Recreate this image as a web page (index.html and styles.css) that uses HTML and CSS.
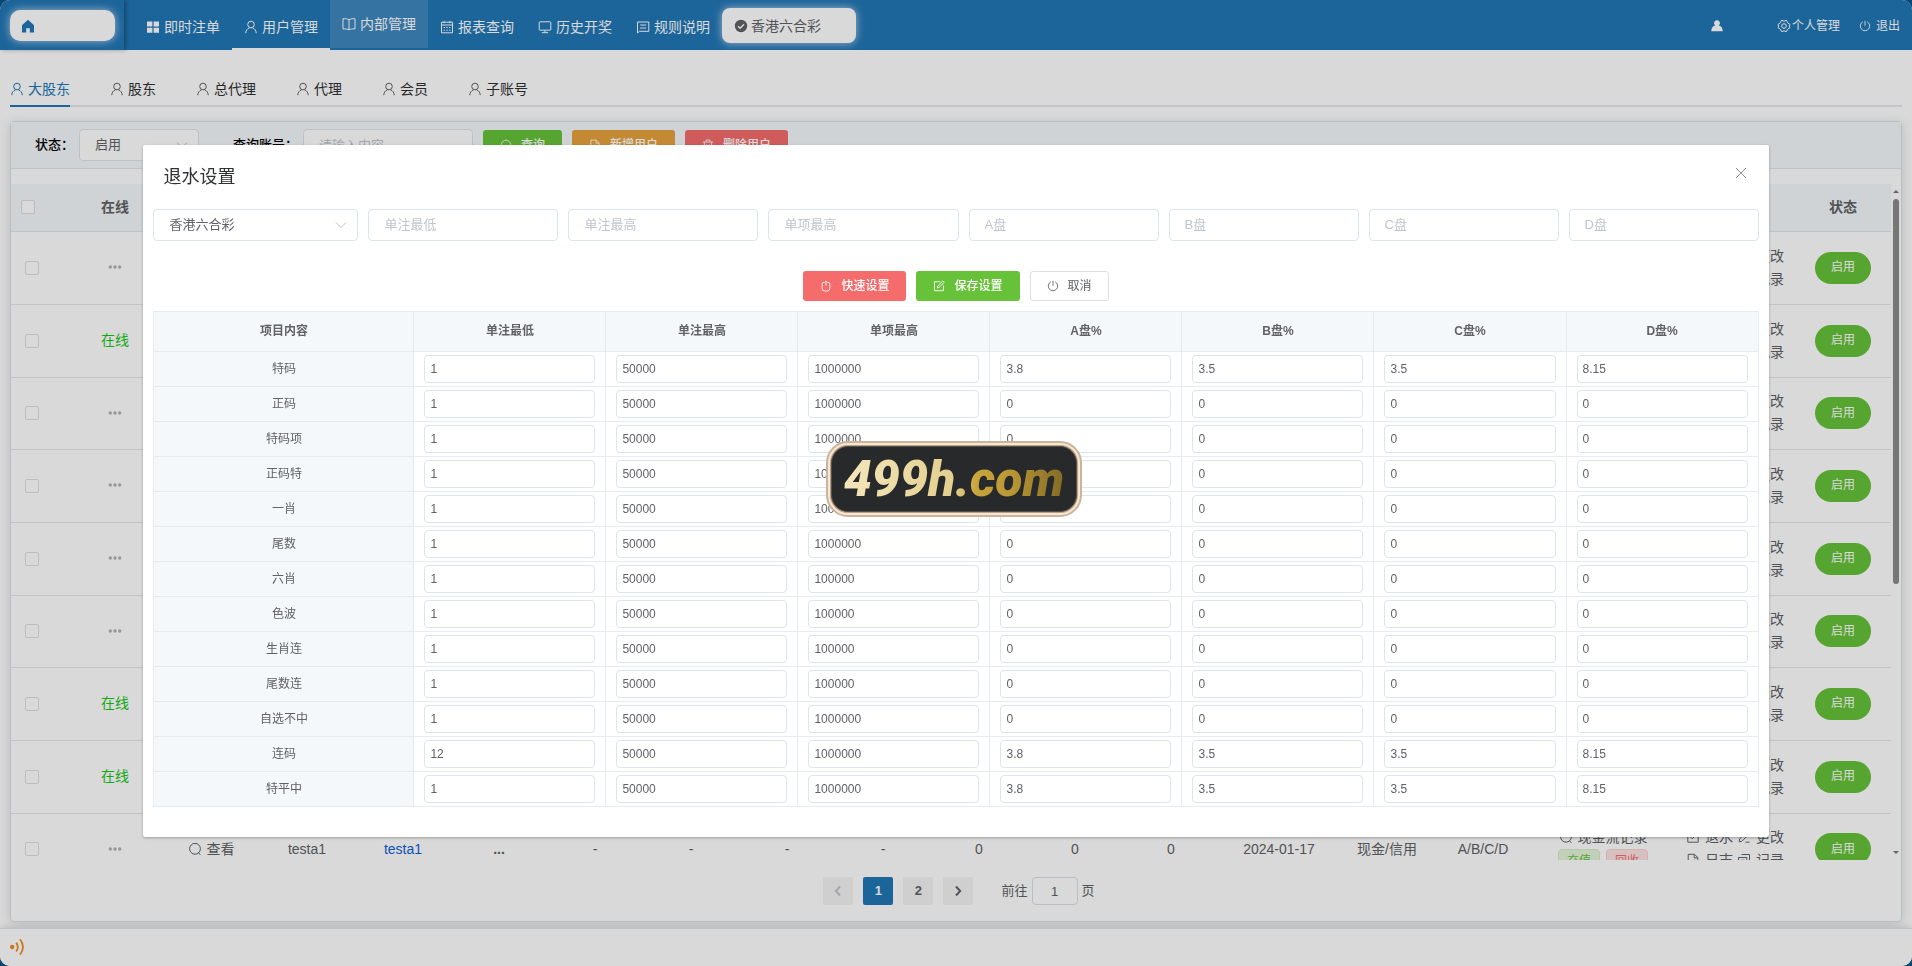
FILE: index.html
```html
<!DOCTYPE html>
<html lang="zh-CN">
<head>
<meta charset="utf-8">
<title>用户管理</title>
<link rel="stylesheet" href="styles.css">
</head>
<body>
<svg class="sprite" aria-hidden="true">
  <symbol id="i-home" viewBox="0 0 14 14"><path d="M7 .8 1 6.200v7.200h4.200V9.200h3.600v4.200H13V6.200z" fill="currentColor" stroke="none"/></symbol>
  <symbol id="i-grid" viewBox="0 0 14 14"><path d="M1 1.500h5.400v5H1zM7.600 1.500H13v5H7.600zM1 7.700h5.400v5H1zM7.600 7.700H13v5H7.600z" fill="currentColor" stroke="none"/></symbol>
  <symbol id="i-user" viewBox="0 0 14 14"><circle cx="7" cy="4.500" r="3.300"/><path d="M1.800 13.200c0-2.700 1.400-4.500 3.700-5.300M12.200 13.200c0-2.700-1.400-4.500-3.700-5.300"/></symbol>
  <symbol id="i-book" viewBox="0 0 14 14"><path d="M7 2.800C5.500 1.800 3.500 1.600 1 1.700v10.200c2.500-.1 4.500.1 6 .9 1.500-.8 3.500-1 6-.9V1.700c-2.500-.1-4.500.1-6 1.100zM7 2.800v10"/></symbol>
  <symbol id="i-cal" viewBox="0 0 14 14"><path d="M1.500 2.200h11v10.600h-11zM1.500 5h11M4.200.8v2.400M9.800.8v2.400M3.600 7.500h1.400M6.300 7.500h1.400M9 7.500h1.400M3.600 10.200h1.400M6.300 10.200h1.400M9 10.200h1.400"/></symbol>
  <symbol id="i-screen" viewBox="0 0 14 14"><path d="M2 1.800h10q.8 0 .8.800v6.800q0 .8-.8.800H2q-.8 0-.8-.8V2.600q0-.8.800-.8zM7 10.200v2.300M3.800 12.700h6.400"/></symbol>
  <symbol id="i-chat" viewBox="0 0 14 14"><path d="M1.500 2h11.300v9.300H3.600l-2.100 1.600zM4.200 5h6M4.200 8h6"/></symbol>
  <symbol id="i-check" viewBox="0 0 14 14"><circle cx="7" cy="7" r="6.200" fill="currentColor" stroke="none"/><path d="M4 7.200l2.200 2.100L10 5.300" stroke="#fff" stroke-width="1.400"/></symbol>
  <symbol id="i-person" viewBox="0 0 14 14"><path d="M7 1.200a2.900 2.900 0 0 1 1.700 5.300c2.500.4 4 2.300 4 5.800H1.300c0-3.500 1.500-5.400 4-5.800A2.900 2.900 0 0 1 7 1.200z" fill="currentColor" stroke="none"/></symbol>
  <symbol id="i-gear" viewBox="0 0 14 14"><path d="M4.600 1.300 7 2.200l2.400-.9 1.300 2.500 2.200 1.500-.6 1.700.6 1.700-2.200 1.500-1.300 2.500L7 11.800l-2.400.9-1.300-2.500-2.200-1.500.6-1.700-.6-1.700 2.200-1.500z"/><circle cx="7" cy="7" r="2.300"/></symbol>
  <symbol id="i-power" viewBox="0 0 14 14"><path d="M4.500 2.100a5.500 5.500 0 1 0 5 0M7 .9v5.800"/></symbol>
  <symbol id="i-search" viewBox="0 0 14 14"><circle cx="7" cy="6.800" r="5.400"/><path d="M10.500 10.700l1.800 2.200"/></symbol>
  <symbol id="i-doc" viewBox="0 0 14 14"><path d="M2.200 1.300h6.300l3.300 3.300v8.200H2.200zM8.200 1.300v3.600h3.600M5 9.800l3-3 1.300 1.300-2.800 2.800"/></symbol>
  <symbol id="i-trash" viewBox="0 0 14 14"><path d="M1 3.500h12M4.800 3.200V1.200h4.400v2M2.700 3.700v9.100h8.600V3.700M5.400 6.300v4M8.600 6.300v4"/></symbol>
  <symbol id="i-mouse" viewBox="0 0 14 14"><path d="M4.600 2.700Q2.500 2.700 2.500 5v4.800q0 3 3 3h3q3 0 3-3V5q0-2.300-2.100-2.300M7 1.200v5.200M5 3.100l2-2 2 2"/></symbol>
  <symbol id="i-edit" viewBox="0 0 14 14"><path d="M8.500 2H1.700v10.500h10.500V6.200M5 9.300l.4-2.200 6.100-6 1.600 1.600-6.100 6z"/></symbol>
  <symbol id="i-down" viewBox="0 0 14 14"><path d="M2 4.500l5 5 5-5"/></symbol>
  <symbol id="i-close" viewBox="0 0 14 14"><path d="M2 2l10 10M12 2 2 12"/></symbol>
  <symbol id="i-left" viewBox="0 0 14 14"><path d="M9 2.500 4.800 7 9 11.500"/></symbol>
  <symbol id="i-right" viewBox="0 0 14 14"><path d="M5 2.500 9.200 7 5 11.500"/></symbol>
  <symbol id="i-more" viewBox="0 0 14 14"><g fill="currentColor" stroke="none"><circle cx="2.300" cy="7" r="1.700"/><circle cx="7" cy="7" r="1.700"/><circle cx="11.700" cy="7" r="1.700"/></g></symbol>
  <symbol id="i-ticked" viewBox="0 0 14 14"><path d="M1.800 1.800h10.400v10.400H1.800zM4.300 6.800l2 2 3.600-3.800"/></symbol>
  <symbol id="i-pen" viewBox="0 0 14 14"><path d="M2.200 11.800l.4-2.800L9.800 1.800l2.300 2.300-7.200 7.200zM8.500 12.200h4"/></symbol>
  <symbol id="i-copy" viewBox="0 0 14 14"><path d="M4.500 1.500h8v8h-2M1.500 4.500h8.300v8.300H1.500zM3.800 7.200h3.800"/></symbol>
  <symbol id="i-sound" viewBox="0 0 16 18"><circle cx="3.200" cy="9" r="2.200" fill="currentColor" stroke="none"/><path d="M7.200 4.600q3.300 4.400 0 8.800M11 1.200q6 7.800 0 15.600" stroke-width="1.800"/></symbol>
</svg>

<div class="page">
  <header class="topbar">
    <div class="brand"><a class="brand-pill" href="#" aria-label="首页"><svg class="icon"><use href="#i-home"/></svg></a></div>
    <nav class="nav">
      <a class="nav-item" href="#"><svg class="icon"><use href="#i-grid"/></svg>即时注单</a>
      <a class="nav-item current" href="#"><svg class="icon"><use href="#i-user"/></svg>用户管理</a>
      <a class="nav-item hovered" href="#"><svg class="icon"><use href="#i-book"/></svg>内部管理</a>
      <a class="nav-item" href="#"><svg class="icon"><use href="#i-cal"/></svg>报表查询</a>
      <a class="nav-item" href="#"><svg class="icon"><use href="#i-screen"/></svg>历史开奖</a>
      <a class="nav-item" href="#"><svg class="icon"><use href="#i-chat"/></svg>规则说明</a>
      <button class="game" type="button"><svg class="icon"><use href="#i-check"/></svg>香港六合彩</button>
    </nav>
    <div class="account">
      <svg class="icon avatar"><use href="#i-person"/></svg>
      <a class="account-link profile" href="#"><svg class="icon"><use href="#i-gear"/></svg>个人管理</a>
      <a class="account-link logout" href="#"><svg class="icon small"><use href="#i-power"/></svg>退出</a>
    </div>
  </header>

  <main class="main">
    <nav class="tabs">
      <a class="tab active" href="#"><svg class="icon"><use href="#i-user"/></svg>大股东</a>
      <a class="tab" href="#"><svg class="icon"><use href="#i-user"/></svg>股东</a>
      <a class="tab" href="#"><svg class="icon"><use href="#i-user"/></svg>总代理</a>
      <a class="tab" href="#"><svg class="icon"><use href="#i-user"/></svg>代理</a>
      <a class="tab" href="#"><svg class="icon"><use href="#i-user"/></svg>会员</a>
      <a class="tab" href="#"><svg class="icon"><use href="#i-user"/></svg>子账号</a>
    </nav>

    <section class="panel">
      <form class="filters">
        <label class="filter-label" for="state">状态：</label>
        <span class="select state-select"><select class="field" id="state"><option>启用</option></select><svg class="icon chevron"><use href="#i-down"/></svg></span>
        <label class="filter-label account-label" for="query">查询账号：</label>
        <input class="field query" id="query" type="text" placeholder="请输入内容">
        <button class="btn success" type="button"><svg class="icon small"><use href="#i-search"/></svg>查询</button>
        <button class="btn warning" type="button"><svg class="icon small"><use href="#i-doc"/></svg>新增用户</button>
        <button class="btn danger" type="button"><svg class="icon small"><use href="#i-trash"/></svg>删除用户</button>
      </form>

      <div class="list">
        <div class="list-view">
          <table class="users">
            <colgroup>
              <col class="c-pick"><col><col><col><col><col><col><col><col><col><col><col><col><col class="c-date"><col><col><col class="c-cash"><col class="c-ops"><col>
            </colgroup>
            <thead>
              <tr>
                <th class="pick"><input class="tick" type="checkbox" aria-label="全选"></th>
                <th>在线</th><th></th><th></th><th></th><th></th><th></th><th></th><th></th><th></th><th></th><th></th><th></th><th></th><th></th><th></th><th></th><th></th><th>状态</th>
              </tr>
            </thead>
            <tbody id="user-rows"></tbody>
          </table>
        </div>
        <div class="scrollbar"><i class="arrow up"></i><i class="thumb"></i><i class="arrow down"></i></div>
      </div>

      <div class="pager">
        <button class="page-btn" type="button" disabled aria-label="上一页"><svg class="icon"><use href="#i-left"/></svg></button>
        <button class="page-btn on" type="button">1</button>
        <button class="page-btn" type="button">2</button>
        <button class="page-btn" type="button" aria-label="下一页"><svg class="icon"><use href="#i-right"/></svg></button>
        <label class="jump">前往<input class="jump-input" type="text" value="1">页</label>
      </div>
    </section>
  </main>

  <footer class="notice"><svg class="sound"><use href="#i-sound"/></svg></footer>
</div>

<div class="overlay">
  <section class="dialog" role="dialog" aria-labelledby="dialog-title">
    <header class="dialog-head">
      <h2 class="dialog-title" id="dialog-title">退水设置</h2>
      <button class="close" type="button" aria-label="关闭"><svg class="icon"><use href="#i-close"/></svg></button>
    </header>
    <div class="quick">
      <span class="select"><select class="field" aria-label="彩种"><option>香港六合彩</option></select><svg class="icon chevron"><use href="#i-down"/></svg></span>
      <input class="field" type="text" placeholder="单注最低" aria-label="单注最低">
      <input class="field" type="text" placeholder="单注最高" aria-label="单注最高">
      <input class="field" type="text" placeholder="单项最高" aria-label="单项最高">
      <input class="field" type="text" placeholder="A盘" aria-label="A盘">
      <input class="field" type="text" placeholder="B盘" aria-label="B盘">
      <input class="field" type="text" placeholder="C盘" aria-label="C盘">
      <input class="field" type="text" placeholder="D盘" aria-label="D盘">
    </div>
    <div class="actions">
      <button class="btn danger" type="button"><svg class="icon small"><use href="#i-mouse"/></svg>快速设置</button>
      <button class="btn success" type="button"><svg class="icon small"><use href="#i-edit"/></svg>保存设置</button>
      <button class="btn plain" type="button"><svg class="icon small"><use href="#i-power"/></svg>取消</button>
    </div>
    <table class="rates">
      <colgroup><col class="c-name"><col><col><col><col><col><col><col></colgroup>
      <thead>
        <tr><th>项目内容</th><th>单注最低</th><th>单注最高</th><th>单项最高</th><th>A盘%</th><th>B盘%</th><th>C盘%</th><th>D盘%</th></tr>
      </thead>
      <tbody id="rate-rows"></tbody>
    </table>
  </section>
  <div class="mark"><span class="mark-face"><span class="mark-text">499h.com</span></span></div>
</div>
<script src="script.js"></script>
</body>
</html>
```

FILE: styles.css
```css
* { box-sizing: border-box; }

body {
  margin: 0;
  background: #0c5488;
  color: #606266;
  font-family: "Liberation Sans", "Noto Sans CJK SC", sans-serif;
  font-size: 14px;
  line-height: 20px;
}

button, input, select { font: inherit; color: inherit; margin: 0; }
button { cursor: pointer; }
a { color: inherit; text-decoration: none; }

.sprite { position: absolute; width: 0; height: 0; }

.icon {
  flex: none;
  width: 14px;
  height: 14px;
  fill: none;
  stroke: currentColor;
  stroke-width: 1;
}
.icon.small { width: 12px; height: 12px; }

.page {
  display: flex;
  flex-direction: column;
  height: 100vh;
  border-radius: 10px;
  overflow: hidden;
  background: #fff;
}

/* top bar */
.topbar {
  flex: none;
  display: flex;
  height: 50px;
  background: #2277b6;
  color: #fff;
}
.brand {
  width: 124px;
  padding: 10px 9px 9px 10px;
  box-shadow: 2px 0 4px rgba(0, 0, 0, .3);
}
.brand-pill {
  display: flex;
  align-items: center;
  height: 31px;
  padding: 0 11px;
  border-radius: 10px;
  background: #fff;
  color: #2277b6;
  box-shadow: 0 0 8px rgba(255, 255, 255, .7);
}
.nav { display: flex; align-items: flex-start; padding-left: 10px; }
.nav-item {
  display: flex;
  align-items: center;
  gap: 4px;
  height: 50px;
  padding: 4px 12px 0;
}
.nav-item.current { box-shadow: inset 0 -2px #fff; }
.nav-item.hovered { height: 48px; padding-top: 0; background: #3f88c0; }
.game {
  display: flex;
  align-items: center;
  gap: 3px;
  width: 134px;
  height: 35px;
  margin-top: 8px;
  padding: 0 12px;
  border: 0;
  border-radius: 8px;
  background: #fff;
  box-shadow: 0 0 8px rgba(255, 255, 255, .7);
  color: #606266;
}
.account {
  display: flex;
  align-items: center;
  margin-left: auto;
  padding: 2px 12px 0 0;
  font-size: 12px;
}
.account-link { display: flex; align-items: center; }
.profile { gap: 1px; margin-left: 53px; }
.logout { gap: 5px; margin-left: 19px; }

/* level tabs */
.main {
  flex: 1;
  min-height: 0;
  display: flex;
  flex-direction: column;
  padding: 21px 10px 6px;
}
.tabs {
  flex: none;
  display: flex;
  gap: 40px;
  height: 36px;
  margin-bottom: 14px;
  color: #303133;
  box-shadow: inset 0 -2px #e4e7ed;
}
.tab { display: flex; align-items: center; gap: 4px; }
.tab .icon { color: #606266; }
.tab.active, .tab.active .icon { color: #2277b6; }
.tab.active { box-shadow: inset 0 -2px #2277b6; }

/* user list */
.panel {
  flex: 1;
  min-height: 0;
  display: flex;
  flex-direction: column;
  border: 1px solid #d8e2ea;
  border-radius: 4px;
  background: #fff;
  box-shadow: 0 2px 12px rgba(0, 0, 0, .14);
}
.filters {
  flex: none;
  display: flex;
  align-items: center;
  gap: 10px;
  height: 47px;
  padding-left: 24px;
  border-bottom: 1px solid #dfe6ec;
  background: #f4f8fb;
}
.filter-label { width: 34px; color: #000; font-size: 13px; font-weight: 500; white-space: nowrap; }
.account-label { width: 60px; margin-left: 24px; }
.select { display: grid; align-items: center; }
.select > * { grid-area: 1 / 1; }
.chevron { justify-self: end; margin-right: 10px; color: #c0c4cc; pointer-events: none; }
.state-select { width: 120px; }
.field {
  width: 100%;
  min-width: 0;
  height: 32px;
  padding: 0 15px;
  border: 1px solid #dae5ec;
  border-radius: 4px;
  background: #fff;
  font-size: 13px;
  appearance: none;
}
.field::placeholder { color: #c0c4cc; opacity: 1; }
.query { width: 170px; }

.btn {
  display: flex;
  align-items: center;
  gap: 9px;
  height: 30px;
  padding: 0 16px;
  border: 1px solid transparent;
  border-radius: 3px;
  color: #fff;
  font-size: 12px;
  font-weight: 500;
  white-space: nowrap;
}
.btn.success { background: #67c23a; }
.btn.warning { background: #e6a23c; }
.btn.danger { background: #f56c6c; }
.btn.plain { border-color: #dcdfe6; background: #fff; color: #606266; font-weight: 400; }

.list { flex: 1; min-height: 0; display: flex; margin-top: 15px; }
.list-view { flex: 1; overflow: hidden; }
.users { width: 100%; table-layout: fixed; border-collapse: collapse; }
.users .c-pick { width: 56px; }
.users .c-date { width: 120px; }
.users .c-cash { width: 144px; }
.users .c-ops { width: 120px; }
.users th { height: 47px; padding: 0; background: #f4f8fb; border-bottom: 1px solid #dfe6ec; }
.users td { height: 73px; padding: 0; border-bottom: 1px solid #e4e8ec; text-align: center; white-space: nowrap; line-height: 23px; }
.users tr:nth-child(3n) td { height: 72px; }
.users .pick { padding-left: 10px; text-align: left; }
.users td.pick { padding-left: 14px; }
.tick {
  display: block;
  width: 14px;
  height: 14px;
  border: 1px solid #dcdfe6;
  border-radius: 2px;
  background: #fff;
  appearance: none;
}
.users .icon { vertical-align: -2px; }
.online { color: #14c814; }
.offline { color: #b0b3b8; }
.users .user-link { color: #0f5fd7; }
.item { margin: 0 2px; }
.item .icon { margin-right: 5px; }
.tag {
  display: inline-block;
  height: 24px;
  margin: 0 3px;
  padding: 0 8px;
  border: 1px solid #d3efc4;
  border-radius: 4px;
  background: #e4f5da;
  color: #67c23a;
  font-size: 12px;
  line-height: 22px;
  vertical-align: top;
}
.tag.red { border-color: #fbd0d0; background: #fde2e2; color: #f56c6c; }
.round {
  height: 32px;
  padding: 0 16px;
  border: 0;
  border-radius: 16px;
  background: #67c23a;
  color: #fff;
  font-size: 12px;
}

.scrollbar {
  display: flex;
  flex-direction: column;
  align-items: center;
  width: 10px;
  padding: 6px 0;
}
.arrow { border: 3px solid transparent; }
.arrow.up { border-top: 0; border-bottom-color: #777; }
.arrow.down { margin-top: auto; border-bottom: 0; border-top-color: #777; }
.thumb { width: 6px; height: 58%; margin-top: 6px; border-radius: 3px; background: #8b8b8b; }

.pager {
  flex: none;
  display: flex;
  justify-content: center;
  gap: 10px;
  padding: 17px 0 16px 6px;
  font-size: 13px;
}
.page-btn {
  display: flex;
  align-items: center;
  justify-content: center;
  width: 30px;
  height: 28px;
  padding: 0;
  border: 0;
  border-radius: 2px;
  background: #f4f4f5;
  font-weight: 700;
}
.page-btn .icon { stroke-width: 2; }
.page-btn:disabled { color: #c0c4cc; }
.page-btn.on { background: #2277b6; color: #fff; }
.jump { display: flex; align-items: center; gap: 4px; margin-left: 18px; }
.jump-input { width: 46px; height: 28px; padding: 0; border: 1px solid #dcdfe6; border-radius: 4px; background: #fff; text-align: center; }

.notice {
  flex: none;
  display: flex;
  align-items: center;
  height: 38px;
  padding: 0 9px 2px;
  border-top: 1px solid #dfe6ec;
  background: #fff;
  box-shadow: 0 -1px 6px rgba(0, 0, 0, .12);
  color: #f08c1e;
}
.sound { width: 16px; height: 18px; fill: none; stroke: currentColor; }

/* dialog */
.overlay { position: fixed; inset: 0; background: rgba(0, 0, 0, .15); }
.dialog {
  width: 85%;
  margin: 15vh auto 0;
  padding: 20px 10px 30px;
  border-radius: 2px;
  background: #fff;
  box-shadow: 0 1px 3px rgba(0, 0, 0, .3);
}
.dialog-head { display: flex; justify-content: space-between; padding: 0 10px 20px; }
.dialog-title { margin: 0; color: #303133; font-size: 18px; font-weight: 400; line-height: 24px; }
.close { display: flex; height: 16px; padding: 1px; border: 0; background: none; color: #909399; }
.quick { display: grid; grid-template-columns: 205fr repeat(7, 190fr); gap: 10px; }
.actions { display: flex; justify-content: center; gap: 10px; padding: 30px 0 10px; }

.rates { width: 100%; table-layout: fixed; border-collapse: collapse; font-size: 12px; text-align: center; }
.rates .c-name { width: 260px; }
.rates th, .rates td { padding: 3px 10px; border: 1px solid #e6ebf1; }
.rates th { background: #f4f8fb; }
.rates thead th { height: 40px; }
.rates tbody th { font-weight: 400; }
.rate {
  display: block;
  width: 100%;
  height: 28px;
  padding: 0 5px;
  border: 1px solid #dae5ec;
  border-radius: 4px;
  background: #fff;
}

/* floating site mark */
.mark {
  position: absolute;
  top: calc(50% - 42px);
  left: calc(50% - 130px);
  width: 256px;
  height: 76px;
  padding: 3px;
  border: 2px solid #c9b49d;
  border-radius: 22px;
  background: #f6e6d2;
}
.mark-face {
  display: flex;
  align-items: center;
  justify-content: center;
  height: 100%;
  border: 1px solid #55504a;
  border-radius: 17px;
  background: #28292b;
  box-shadow: 0 0 0 1px #b99f84;
}
.mark-text {
  padding: 0 4px;
  background: linear-gradient(90deg, #f4e7bd, #e3cf8e 50%, #c8a53a 60%, #b99735 75%, #806824);
  background-clip: text;
  color: transparent;
  font-family: Roboto, sans-serif;
  font-size: 50px;
  font-style: italic;
  font-weight: 900;
  line-height: 64px;
}
```

FILE: script.js
```js
const icon = (name) => `<svg class="icon"><use href="#i-${name}"/></svg>`;
const item = (name, text) => `<a class="item" href="#">${icon(name)}${text}</a>`;

const onlineRows = [false, true, false, false, false, false, true, true, false];

document.getElementById('user-rows').innerHTML = onlineRows.map((online) => `
  <tr>
    <td class="pick"><input class="tick" type="checkbox" aria-label="选择"></td>
    <td>${online ? '<span class="online">在线</span>' : `<span class="offline">${icon('more')}</span>`}</td>
    <td>${item('search', '查看')}</td>
    <td>testa1</td>
    <td><a class="user-link" href="#">testa1</a></td>
    <td><b>...</b></td>
    <td>-</td><td>-</td><td>-</td><td>-</td>
    <td>0</td><td>0</td><td>0</td>
    <td>2024-01-17</td>
    <td>现金/信用</td>
    <td>A/B/C/D</td>
    <td>${item('search', '现金流记录')}<br><span class="tag">充值</span><span class="tag red">回收</span></td>
    <td>${item('ticked', '退水')}${item('pen', '更改')}<br>${item('doc', '日志')}${item('copy', '记录')}</td>
    <td><button class="round" type="button">启用</button></td>
  </tr>`).join('');

const heads = ['单注最低', '单注最高', '单项最高', 'A盘%', 'B盘%', 'C盘%', 'D盘%'];
const rates = [
  ['特码', 1, 50000, 1000000, 3.8, 3.5, 3.5, 8.15],
  ['正码', 1, 50000, 1000000, 0, 0, 0, 0],
  ['特码项', 1, 50000, 1000000, 0, 0, 0, 0],
  ['正码特', 1, 50000, 1000000, 0, 0, 0, 0],
  ['一肖', 1, 50000, 1000000, 0, 0, 0, 0],
  ['尾数', 1, 50000, 1000000, 0, 0, 0, 0],
  ['六肖', 1, 50000, 100000, 0, 0, 0, 0],
  ['色波', 1, 50000, 100000, 0, 0, 0, 0],
  ['生肖连', 1, 50000, 100000, 0, 0, 0, 0],
  ['尾数连', 1, 50000, 100000, 0, 0, 0, 0],
  ['自选不中', 1, 50000, 1000000, 0, 0, 0, 0],
  ['连码', 12, 50000, 1000000, 3.8, 3.5, 3.5, 8.15],
  ['特平中', 1, 50000, 1000000, 3.8, 3.5, 3.5, 8.15],
];

document.getElementById('rate-rows').innerHTML = rates.map(([name, ...values]) => `
  <tr><th>${name}</th>${values.map((v, i) => `<td><input class="rate" type="text" value="${v}" aria-label="${name} ${heads[i]}"></td>`).join('')}</tr>`).join('');
```
